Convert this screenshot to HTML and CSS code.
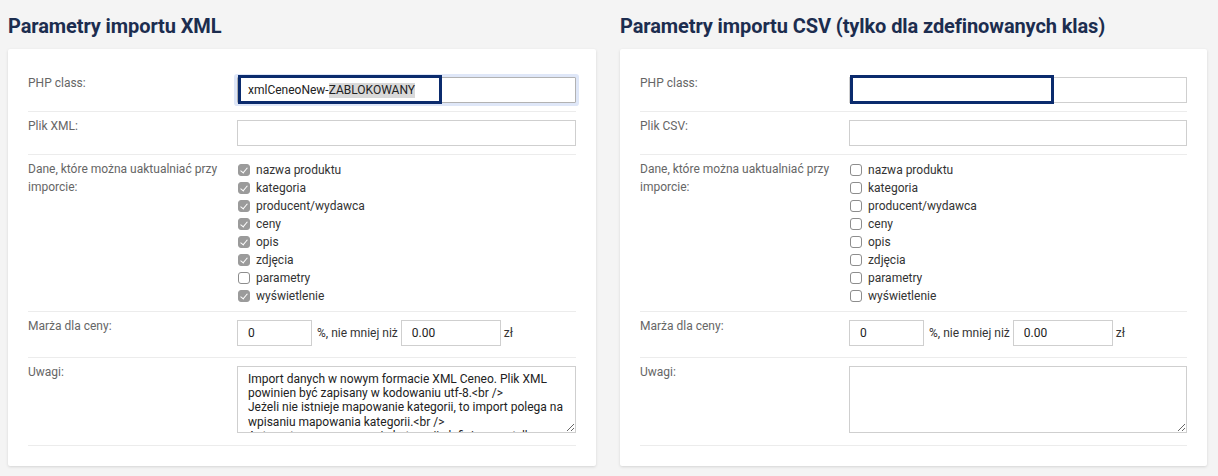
FILE: index.html
```html
<!DOCTYPE html>
<html lang="pl">
<head>
<meta charset="utf-8">
<title>Parametry importu</title>
<link rel="stylesheet" href="styles.css">
</head>
<body>
<div class="page">
  <section class="col col-left">
    <h2 class="title">Parametry importu XML</h2>
    <div class="panel">
      <div class="row">
        <div class="lbl">PHP class:</div>
        <div class="fld">
          <div class="annot-wrap">
            <div class="input focused">xmlCeneoNew-<span class="sel">ZABLOKOWANY</span></div>
            <div class="annot"></div>
          </div>
        </div>
      </div>
      <div class="row">
        <div class="lbl">Plik XML:</div>
        <div class="fld"><input class="input" type="text" value=""></div>
      </div>
      <div class="row">
        <div class="lbl">Dane, które można uaktualniać przy imporcie:</div>
        <div class="fld fld-list">
          <div class="cb-item"><span class="cb on"></span>nazwa produktu</div>
          <div class="cb-item"><span class="cb on"></span>kategoria</div>
          <div class="cb-item"><span class="cb on"></span>producent/wydawca</div>
          <div class="cb-item"><span class="cb on"></span>ceny</div>
          <div class="cb-item"><span class="cb on"></span>opis</div>
          <div class="cb-item"><span class="cb on"></span>zdjęcia</div>
          <div class="cb-item"><span class="cb"></span>parametry</div>
          <div class="cb-item"><span class="cb on"></span>wyświetlenie</div>
        </div>
      </div>
      <div class="row">
        <div class="lbl">Marża dla ceny:</div>
        <div class="fld fld-inline">
          <input class="input w-pct" type="text" value="0">
          <span class="unit unit-pct">%, nie mniej niż</span>
          <input class="input w-min" type="text" value="0.00">
          <span class="unit">zł</span>
        </div>
      </div>
      <div class="row">
        <div class="lbl">Uwagi:</div>
        <div class="fld fld-area">
          <textarea class="area" wrap="off">Import danych w nowym formacie XML Ceneo. Plik XML
powinien być zapisany w kodowaniu utf-8.&lt;br /&gt;
Jeżeli nie istnieje mapowanie kategorii, to import polega na
wpisaniu mapowania kategorii.&lt;br /&gt;
Automatyczne mapowanie kategorii, definiowane tylko</textarea>
        </div>
      </div>
    </div>
  </section>

  <section class="col col-right">
    <h2 class="title">Parametry importu CSV (tylko dla zdefinowanych klas)</h2>
    <div class="panel">
      <div class="row">
        <div class="lbl">PHP class:</div>
        <div class="fld">
          <div class="annot-wrap">
            <input class="input" type="text" value="">
            <div class="annot"></div>
          </div>
        </div>
      </div>
      <div class="row">
        <div class="lbl">Plik CSV:</div>
        <div class="fld"><input class="input" type="text" value=""></div>
      </div>
      <div class="row">
        <div class="lbl">Dane, które można uaktualniać przy imporcie:</div>
        <div class="fld fld-list">
          <div class="cb-item"><span class="cb"></span>nazwa produktu</div>
          <div class="cb-item"><span class="cb"></span>kategoria</div>
          <div class="cb-item"><span class="cb"></span>producent/wydawca</div>
          <div class="cb-item"><span class="cb"></span>ceny</div>
          <div class="cb-item"><span class="cb"></span>opis</div>
          <div class="cb-item"><span class="cb"></span>zdjęcia</div>
          <div class="cb-item"><span class="cb"></span>parametry</div>
          <div class="cb-item"><span class="cb"></span>wyświetlenie</div>
        </div>
      </div>
      <div class="row">
        <div class="lbl">Marża dla ceny:</div>
        <div class="fld fld-inline">
          <input class="input w-pct" type="text" value="0">
          <span class="unit unit-pct">%, nie mniej niż</span>
          <input class="input w-min" type="text" value="0.00">
          <span class="unit">zł</span>
        </div>
      </div>
      <div class="row">
        <div class="lbl">Uwagi:</div>
        <div class="fld fld-area">
          <textarea class="area" wrap="off"></textarea>
        </div>
      </div>
    </div>
  </section>
</div>
</body>
</html>
```

FILE: styles.css
```css
* { box-sizing: border-box; }

html, body {
  margin: 0;
  padding: 0;
  background: #f4f4f4;
}

body {
  font-family: Roboto, "Liberation Sans", Arial, sans-serif;
  font-size: 12px;
  color: #333;
}

.page {
  display: grid;
  grid-template-columns: 588px 587px;
  column-gap: 24px;
  padding: 14px 8px 10px 8px;
}

.title {
  margin: 0 0 11px 0;
  font-size: 20px;
  line-height: 24px;
  font-weight: 700;
  letter-spacing: -0.1px;
  color: #1c2d4f;
}

.panel {
  background: #fff;
  border-radius: 2px;
  box-shadow: 0 1px 3px rgba(0, 0, 0, 0.13);
  padding: 20px;
}

.row {
  display: grid;
  grid-template-columns: 209px 1fr;
  padding: 4px 0;
  border-bottom: 1px solid #ececec;
}

.lbl {
  color: #666;
  line-height: 18px;
  padding-top: 1px;
  padding-right: 4px;
}

.fld {
  padding: 4px 0;
}

.input {
  display: block;
  width: 100%;
  height: 26px;
  margin: 0;
  padding: 0 10px;
  border: 1px solid #cfcfcf;
  border-radius: 0;
  background: #fff;
  font-family: Roboto, "Liberation Sans", Arial, sans-serif;
  font-size: 12px;
  color: #222;
  line-height: 24px;
  outline: none;
}

.input.focused {
  border-color: #b2b2b2;
  box-shadow: 0 0 0 3px #dfe7f8;
  border-radius: 1px;
  white-space: nowrap;
}

.sel {
  background: #d9d9d9;
  line-height: 15px;
  display: inline-block;
}

.annot-wrap {
  position: relative;
}

.annot {
  position: absolute;
  left: 1px;
  top: -2px;
  width: 204px;
  height: 29px;
  border: 3px solid #0b2b6d;
  pointer-events: none;
}

.fld-list {
  padding: 2px 0;
}

.cb-item {
  display: flex;
  align-items: center;
  gap: 6px;
  height: 18px;
  color: #333;
  padding-left: 1px;
}

.cb {
  position: relative;
  flex: none;
  width: 12px;
  height: 12px;
  border: 1px solid #8d8d8d;
  border-radius: 3px;
  background: #fff;
}

.cb.on {
  background: #9b9b9b;
  border-color: #9b9b9b;
}

.cb.on::after {
  content: "";
  position: absolute;
  left: 3px;
  top: 1px;
  width: 3px;
  height: 6px;
  border-right: 1.6px solid #fff;
  border-bottom: 1.6px solid #fff;
  transform: rotate(40deg);
}

.fld-inline {
  display: flex;
  align-items: center;
  padding-bottom: 7px;
}

.w-pct { width: 75px; }
.w-min { width: 100px; }

.unit {
  color: #333;
  margin: 0 3px;
}

.unit-pct {
  margin-left: 5px;
}

.fld-area {
  padding-bottom: 8px;
}

.area {
  display: block;
  width: 100%;
  height: 67px;
  margin: 0;
  padding: 5px 10px;
  border: 1px solid #cfcfcf;
  border-radius: 0;
  font-family: Roboto, "Liberation Sans", Arial, sans-serif;
  font-size: 12px;
  line-height: 14.2px;
  color: #222;
  background: #fff;
  overflow: hidden;
  resize: both;
  white-space: pre;
  outline: none;
}
```
